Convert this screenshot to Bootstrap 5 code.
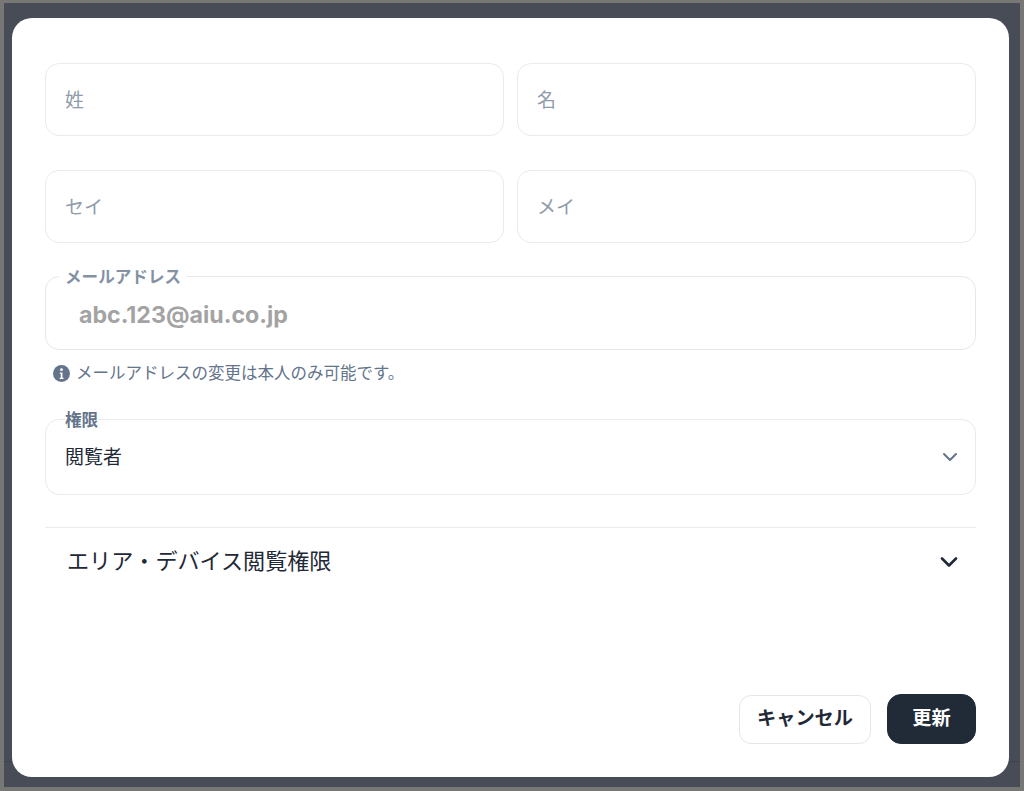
<!DOCTYPE html>
<html lang="ja">
<head>
<meta charset="utf-8">
<title>ユーザー編集</title>
<link href="https://cdn.jsdelivr.net/npm/bootstrap@5.3.0/dist/css/bootstrap.min.css" rel="stylesheet">
<style>
html,body{height:100%;}
body{margin:0;overflow:hidden;background:#484c56;border:solid #777876;border-width:3px 4px 4px 4px;font-family:"Inter","Noto Sans CJK JP",sans-serif;color:#1f2937;}
.backdrop-area{height:100%;padding:15px 11px 10px 8px;background-image:linear-gradient(#3e424b,#3e424b);background-size:100% 1px;background-repeat:no-repeat;background-position:0 758px;}
.sheet{height:100%;background:#fff;border-radius:20px;padding:45px 33px 33px 33px;}
.field-grid{display:grid;grid-template-columns:1fr 1fr;column-gap:13px;row-gap:34px;margin-bottom:33px;}
.tf.form-control,.tf.form-select{height:73px;border:1px solid #e9ebee;border-radius:14px;padding:1px 19px 0;font-size:19px;color:#1f2937;box-shadow:none;}
.tf::placeholder{color:#8f9cab;opacity:1;}
.field-wrap{position:relative;}
.float-label{position:absolute;left:14px;top:-9px;background:#fff;padding:0 6px;font-size:16.6px;line-height:20px;font-weight:700;color:#8492a3;}
.float-label.plain{top:-9px;left:20px;padding:0;color:#64748b;}
.tf.locked.form-control{height:74px;background:#fff;color:#a3a3a3;font-weight:700;font-size:23.2px;padding:3px 19px 0 33px;opacity:1;border-color:#e5e7eb;}
.note-line{font-size:16.5px;line-height:20px;color:#64748b;margin:13px 0 36px 8px;gap:6px;}
.tf.form-select{height:76px;border-color:#e8ebef;background-image:none;padding-top:2px;cursor:pointer;}
.chev-a{position:absolute;right:18px;top:33px;}
.drawer-head{border-top:1px solid #e9ebee;margin-top:32px;height:68px;padding:0 18px 0 22px;font-size:22.1px;color:#1f2937;}
.action-btn{height:49px;font-size:19.2px;font-weight:700;border-radius:12px;line-height:1;padding:0;}
.btn-cancel{width:132px;background:#fff;border:1px solid #e2e6ea;color:#1f2937;}
.btn-update{width:89px;background:#212b37;border:1px solid #212b37;color:#fff;height:50px;border-radius:14px;}
.foot-row{gap:16px;}
</style>
</head>
<body>
<div class="backdrop-area">
  <form class="sheet d-flex flex-column">
    <div class="field-grid">
      <input class="form-control tf" type="text" placeholder="姓" aria-label="姓">
      <input class="form-control tf" type="text" placeholder="名" aria-label="名">
      <input class="form-control tf" type="text" placeholder="セイ" aria-label="セイ">
      <input class="form-control tf" type="text" placeholder="メイ" aria-label="メイ">
    </div>
    <div class="field-wrap">
      <input class="form-control tf locked" type="text" value="abc.123@aiu.co.jp" readonly aria-label="メールアドレス">
      <span class="float-label">メールアドレス</span>
    </div>
    <div class="note-line d-flex align-items-center">
      <svg width="17" height="17" viewBox="0 0 16 16" aria-hidden="true"><circle cx="8" cy="8" r="8" fill="#64748b"/><circle cx="8" cy="4.4" r="1.3" fill="#fff"/><path d="M6.4 7h2.5v5h1v1.2H6.3V12h1V8.2h-.9z" fill="#fff"/></svg>
      <span>メールアドレスの変更は本人のみ可能です。</span>
    </div>
    <div class="field-wrap">
      <select class="form-select tf" aria-label="権限"><option>閲覧者</option></select>
      <span class="float-label plain">権限</span>
      <svg class="chev-a" width="16" height="10" viewBox="0 0 16 10" aria-hidden="true"><path d="M2 2l6 6 6-6" fill="none" stroke="#64748b" stroke-width="2" stroke-linecap="round" stroke-linejoin="round"/></svg>
    </div>
    <div class="drawer-head d-flex align-items-center justify-content-between">
      <span>エリア・デバイス閲覧権限</span>
      <svg width="18" height="12" viewBox="0 0 18 12" aria-hidden="true"><path d="M2 2.5l7 7 7-7" fill="none" stroke="#1f2937" stroke-width="2.6" stroke-linecap="round" stroke-linejoin="round"/></svg>
    </div>
    <div class="foot-row d-flex justify-content-end align-items-center mt-auto">
      <button type="button" class="btn action-btn btn-cancel">キャンセル</button>
      <button type="button" class="btn action-btn btn-update">更新</button>
    </div>
  </form>
</div>
<script src="https://cdn.jsdelivr.net/npm/bootstrap@5.3.0/dist/js/bootstrap.bundle.min.js"></script>
</body>
</html>
